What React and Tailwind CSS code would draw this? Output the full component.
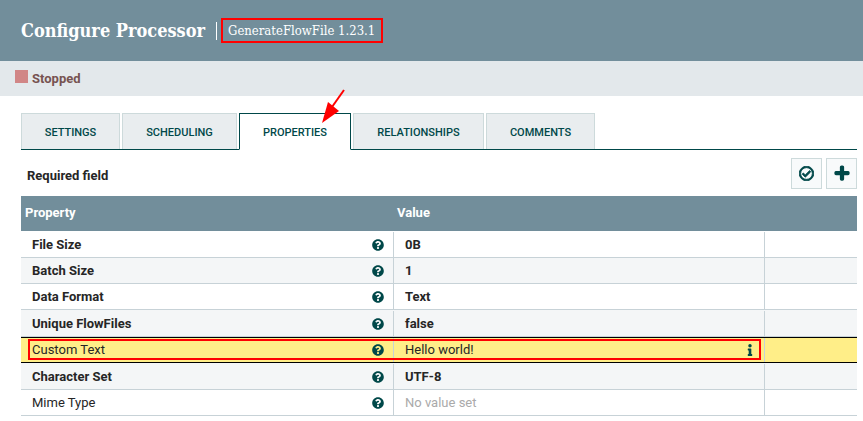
import React from "react";
import { FaQuestionCircle, FaInfo, FaRegCheckCircle, FaPlus } from "react-icons/fa";

const tabs = [
  { label: "SETTINGS", w: "w-[99px]" },
  { label: "SCHEDULING", w: "w-[115px]" },
  { label: "PROPERTIES", w: "w-[112px]", active: true },
  { label: "RELATIONSHIPS", w: "w-[131px]" },
  { label: "COMMENTS", w: "w-[109px]" },
];

const rows = [
  { name: "File Size", value: "0B", h: "h-[27px] pt-px" },
  { name: "Batch Size", value: "1", h: "h-[26px]", alt: true },
  { name: "Data Format", value: "Text", h: "h-[26px]" },
  { name: "Unique FlowFiles", value: "false", h: "h-[27px] pt-px", alt: true },
  { name: "Custom Text", value: "Hello world!", h: "h-[26px]", hl: true },
  { name: "Character Set", value: "UTF-8", h: "h-[27px] pt-px", alt: true },
  { name: "Mime Type", value: "No value set", h: "h-[26px]", light: true, empty: true },
];

function Row({ r }) {
  const bg = r.hl ? "bg-[#ffee88]" : r.alt ? "bg-[#f4f6f7]" : "bg-white";
  const border = r.hl ? "border-y border-y-black" : "border-b border-b-[#c7d2d7]";
  return (
    <div className={`flex ${r.h} ${bg} ${border} text-[13px] text-[#262626]`}>
      <div className={`w-[373px] flex items-center pl-[11px] pr-[9px] border-r border-r-[#c7d2d7] ${r.light || r.hl ? "font-normal" : "font-bold"}`}>
        <span className="flex-1">{r.name}</span>
        <FaQuestionCircle className="text-[#004849] w-[12px] h-[12px]" />
      </div>
      <div className={`w-[371px] flex items-center pl-[11px] pr-[11px] border-r border-r-[#c7d2d7] ${r.hl ? "font-normal" : r.empty ? "text-[#aaaaaa]" : "font-bold"}`}>
        <span className="flex-1">{r.value}</span>
        {r.hl && <FaInfo className="text-[#004849] w-[6px] h-[12px]" />}
      </div>
      <div className="flex-1" />
    </div>
  );
}

export default function App() {
  return (
    <div className="relative w-[863px] h-[421px] overflow-hidden bg-white font-['Roboto',sans-serif]">
      <div className="h-[61px] bg-[#728e9b] flex items-center pl-[21px] text-white">
        <div className="font-['DejaVu_Serif_Condensed','DejaVu_Serif',serif] font-bold text-[18px]">Configure Processor</div>
        <div className="ml-[11px] h-[18px] border-l border-l-white" />
        <div className="ml-[4px] h-[25px] w-[162px] pl-[5px] flex items-center border-[2px] border-[#ff0000] font-['DejaVu_Serif_Condensed','DejaVu_Serif',serif] text-[13px]">
          GenerateFlowFile 1.23.1
        </div>
      </div>

      <div className="h-[35px] bg-[#e3e8eb] flex items-start pl-[15px] pt-[9px]">
        <div className="w-[13px] h-[13px] bg-[#d18686]" />
        <div className="ml-[4px] text-[13px] font-bold text-[#775351] leading-[17px]">Stopped</div>
      </div>

      <div className="mx-[6px] ml-[21px] mt-[17px]">
        <div className="flex gap-[2px] h-[37px] border-b border-b-[#004849]">
          {tabs.map((t) => (
            <div
              key={t.label}
              className={
                t.active
                  ? `${t.w} h-[37px] pt-[3px] bg-white border border-[#004849] border-b-white flex items-center justify-center text-[11px] font-medium text-[#004849]`
                  : `${t.w} h-[36px] pt-[3px] bg-[#e9edef] border border-[#cddadb] border-b-0 flex items-center justify-center text-[11px] font-medium text-[#004849]`
              }
            >
              {t.label}
            </div>
          ))}
        </div>

        <div className="flex items-center h-[46px] pl-[6px]">
          <div className="flex-1 pt-[5px] text-[13px] font-bold text-[#262626]">Required field</div>
          <div className="w-[31px] h-[31px] bg-[#f8fafb] border border-[#cddadb] flex items-center justify-center">
            <FaRegCheckCircle className="text-[#004849] stroke-[30] w-[15px] h-[15px]" />
          </div>
          <div className="ml-[4px] w-[31px] h-[31px] bg-[#f8fafb] border border-[#cddadb] flex items-center justify-center">
            <FaPlus className="text-[#004849] stroke-[40] w-[16px] h-[16px]" />
          </div>
        </div>

        <div className="flex h-[35px] pb-[2px] bg-[#728e9b] items-center text-[13px] font-bold text-white">
          <div className="w-[372px] pl-[4px]">Property</div>
          <div className="pl-[4px]">Value</div>
        </div>

        {rows.map((r) => (
          <Row key={r.name} r={r} />
        ))}
      </div>

      {/* red annotations over the screenshot */}
      <div className="absolute left-[28px] top-[339px] w-[733px] h-[21px] border-[2px] border-[#ff0000]" />
      <svg className="absolute left-[318px] top-[88px]" width="30" height="40" viewBox="0 0 30 40">
        <path d="M26 2 L14 19" stroke="#ff0000" strokeWidth="2" fill="none" />
        <path d="M4 35 L10 14 L21 23 Z" fill="#ff0000" />
      </svg>
    </div>
  );
}
